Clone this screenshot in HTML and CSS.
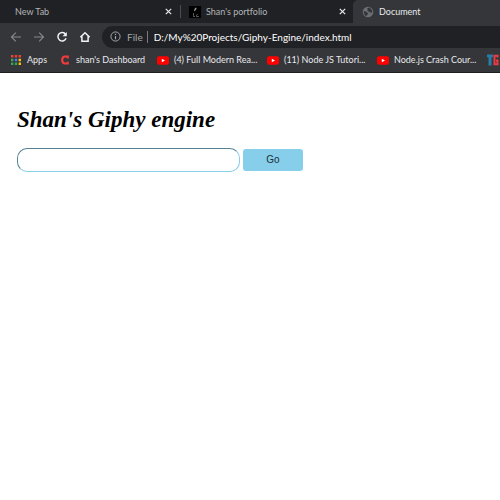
FILE: index.html
```html
<!DOCTYPE html>
<html lang="en">
<head>
<meta charset="utf-8">
<title>Document</title>
<link rel="stylesheet" href="styles.css">
</head>
<body>
<header class="browser">
  <nav class="tabs" aria-label="Tabs">
    <div class="tab tab-first">
      <span class="tab-title">New Tab</span>
      <button class="close" aria-label="Close tab"><svg width="7" height="7" viewBox="0 0 7 7"><path d="M.8.8l5.4 5.4M6.2.8L.8 6.2" stroke="#e8eaed" stroke-width="1.2"/></svg></button>
    </div>
    <div class="tab tab-second">
      <svg class="tab-icon" width="12" height="12" viewBox="0 0 12 12"><path fill="#000" d="M0 0h12v12H0z"/><path fill="#999" d="M6 2l1-.6.6 1-.7 1.4L6 5l-1 .3.3-1.600z"/><path fill="#555" d="M4 7h1v3h1v1H4zM7 9l2-1v1H8v1h2v1H7z"/></svg>
      <span class="tab-title">Shan's portfolio</span>
      <button class="close" aria-label="Close tab"><svg width="7" height="7" viewBox="0 0 7 7"><path d="M.8.8l5.4 5.4M6.2.8L.8 6.2" stroke="#e8eaed" stroke-width="1.2"/></svg></button>
    </div>
    <div class="tab tab-active">
      <svg class="tab-icon" width="12" height="12" viewBox="0 0 12 12"><circle cx="6" cy="6" r="5.3" fill="#6b6e72"/><path fill="#35363a" d="M1.8 5l2 .4 1.5 1.3 1 .2-.5 1.5-.8.4-.4 1.5C3 9.700 1.500 8 1.800 5zM5 2.200l2-.7C9 2 10.300 4 10.300 6l-1.300.9-1.200-1L6.300 5.500 5 4.700l1-1z"/></svg>
      <span class="tab-title">Document</span>
    </div>
  </nav>

  <div class="toolbar">
    <button class="tool" aria-label="Back"><svg width="12" height="12" viewBox="0 0 12 12"><path d="M11 6H1.500M5.800 1.700L1.500 6l4.300 4.300" fill="none" stroke="#85878b" stroke-width="1.200"/></svg></button>
    <button class="tool" aria-label="Forward"><svg width="12" height="12" viewBox="0 0 12 12"><path d="M1 6h9.500M6.200 1.700L10.500 6l-4.300 4.300" fill="none" stroke="#85878b" stroke-width="1.200"/></svg></button>
    <button class="tool" aria-label="Reload"><svg width="12" height="12" viewBox="0 0 12 12"><path d="M9.600 3.300A4.200 4.200 0 1 0 10.100 7.200" fill="none" stroke="#f1f3f4" stroke-width="1.500"/><path d="M10.800.9v4.300H6.500z" fill="#f1f3f4"/></svg></button>
    <button class="tool" aria-label="Home"><svg width="12" height="12" viewBox="0 0 12 12"><path d="M1.300 6.200L6 1.800l4.700 4.400M2.900 5.200v5.100h6.200V5.200" fill="none" stroke="#f1f3f4" stroke-width="1.500"/></svg></button>
    <div class="omnibox">
      <svg width="11" height="11" viewBox="0 0 11 11"><circle cx="5.500" cy="5.500" r="4.600" fill="none" stroke="#a3a6aa"/><path d="M5.500 5v3.200M5.500 2.700v1.200" stroke="#a3a6aa" stroke-width="1.200"/></svg>
      <label class="scheme" for="address">File</label>
      <input class="address" id="address" type="text" value="D:/My%20Projects/Giphy-Engine/index.html">
    </div>
  </div>

  <nav class="bookmarks" aria-label="Bookmarks">
    <a class="bookmark bookmark-apps" href="#"><svg width="10" height="10" viewBox="0 0 10 10"><path fill="#ea4335" d="M0 0h2.400v2.400H0zM3.800 0h2.400v2.400H3.800zM7.600 0H10v2.400H7.600z"/><path fill="#34a853" d="M0 3.800h2.400v2.400H0zM0 7.600h2.400V10H0zM3.800 7.600h2.400V10H3.800z"/><path fill="#4285f4" d="M3.800 3.800h2.400v2.400H3.800z"/><path fill="#fbbc05" d="M7.600 3.800H10v2.400H7.600zM7.600 7.600H10V10H7.600z"/></svg>Apps</a>
    <a class="bookmark bookmark-dashboard" href="#"><svg width="10" height="10" viewBox="0 0 10 10"><path d="M7.700 3.400V1.500H4.500Q2.200 2 2.200 5t2.300 3.500h3.200V6.800" fill="none" stroke="#f23c3c" stroke-width="2.200"/></svg>shan's Dashboard</a>
    <a class="bookmark bookmark-video" href="#"><svg width="12" height="9" viewBox="0 0 12 9"><rect y=".3" width="12" height="8.400" rx="2" fill="#f00"/><path fill="#fff" d="M4.800 2.700v3.600L8 4.500z"/></svg>(4) Full Modern Rea...</a>
    <a class="bookmark bookmark-video" href="#"><svg width="12" height="9" viewBox="0 0 12 9"><rect y=".3" width="12" height="8.400" rx="2" fill="#f00"/><path fill="#fff" d="M4.800 2.700v3.600L8 4.500z"/></svg>(11) Node JS Tutori...</a>
    <a class="bookmark bookmark-video" href="#"><svg width="12" height="9" viewBox="0 0 12 9"><rect y=".3" width="12" height="8.400" rx="2" fill="#f00"/><path fill="#fff" d="M4.800 2.700v3.600L8 4.500z"/></svg>Node.js Crash Cour...</a>
    <a class="bookmark" href="#" aria-label="TG"><svg width="12" height="12" viewBox="0 0 12 12"><path fill="#277da8" d="M0 .5h6v2.700H4.500v8.300H1.500V3.200H0z"/><path d="M10.500 3.500V1.800H7.500v8.400h3V6.500H9" fill="none" stroke="#ed3b45" stroke-width="2"/></svg></a>
  </nav>
</header>

<main class="page">
  <h1 class="title">Shan's Giphy engine</h1>
  <form class="search">
    <input class="search-field" type="text" aria-label="Search GIFs">
    <button class="search-button" type="button">Go</button>
  </form>
</main>
</body>
</html>
```

FILE: styles.css
```css
* {
  box-sizing: border-box;
}

body {
  margin: 0;
  background: #fff;
  color: #000;
  font-family: "Liberation Serif", serif;
}

svg {
  display: block;
  flex: none;
}

button,
input {
  margin: 0;
  padding: 0;
  border: 0;
  background: none;
  font: inherit;
}

.browser {
  overflow: hidden;
  background: #35363a;
  border-bottom: 1px solid #1d1e20;
  color: #e8eaed;
  font: 9px/12px Lato, "Open Sans", sans-serif;
  font-variant-ligatures: none;
}

.tabs {
  display: flex;
  height: 23px;
  background: #202124;
}

.tab {
  display: flex;
  align-items: center;
  gap: 5px;
  color: #b3b6ba;
  white-space: nowrap;
}

.tab-first {
  flex: 0 0 181px;
  padding: 0 9px 0 15px;
  background: linear-gradient(#4a4c50, #4a4c50) right 5px / 1px 13px no-repeat;
}

.tab-second {
  flex: 0 0 172px;
  padding: 0 7px 0 8px;
}

.tab-active {
  flex: 1;
  padding: 0 9px;
  background: #35363a;
  border-radius: 5px 0 0;
  color: #e8eaed;
}

.tab-title {
  flex: 1;
}

.toolbar {
  display: flex;
  align-items: center;
  gap: 11px;
  height: 27px;
  padding-left: 10px;
}

.omnibox {
  display: flex;
  flex: 1;
  align-items: center;
  gap: 6px;
  height: 22px;
  padding-left: 8px;
  background: #202124;
  border-radius: 11px 0 0 11px;
  font-size: 10px;
}

.scheme {
  padding-right: 4px;
  border-right: 1px solid #777a7e;
  color: #a3a6aa;
}

.address {
  flex: 1;
  min-width: 0;
  color: #fff;
}

.bookmarks {
  display: flex;
  align-items: center;
  height: 22px;
  padding: 0 0 2px 11px;
}

.bookmark {
  display: flex;
  flex: none;
  align-items: center;
  gap: 6px;
  color: #e8eaed;
  text-decoration: none;
  white-space: nowrap;
}

.bookmark-apps {
  width: 49px;
}

.bookmark-dashboard {
  width: 97px;
}

.bookmark-video {
  gap: 5px;
  width: 110px;
}

.page {
  padding: 32px 17px;
}

.title {
  margin: 0 0 13px;
  font-size: 23px;
  font-style: italic;
  line-height: 30px;
}

.search {
  display: flex;
  align-items: center;
  gap: 3px;
}

.search-field {
  width: 223px;
  height: 24px;
  padding: 0 8px;
  border: 1px inset skyblue;
  border-radius: 10px;
}

.search-button {
  width: 60px;
  height: 22px;
  background: skyblue;
  border-radius: 3px;
  color: #1c3039;
  font: 10px/12px "Liberation Sans", sans-serif;
}
```
